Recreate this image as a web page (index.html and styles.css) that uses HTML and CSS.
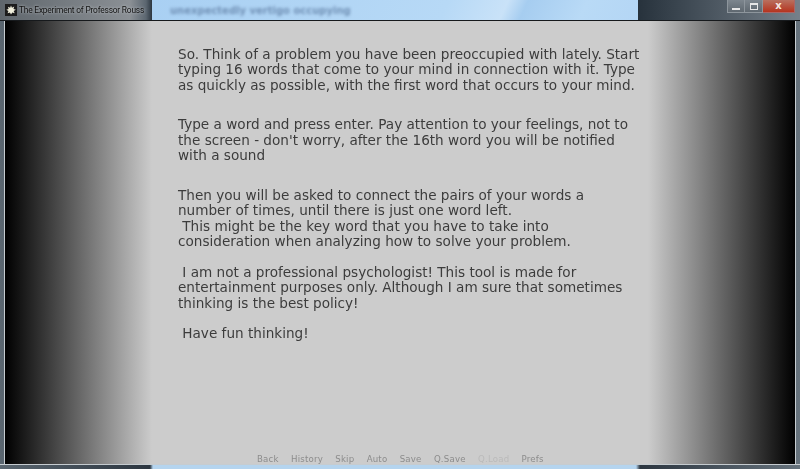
FILE: index.html
```html
<!DOCTYPE html>
<html lang="en">
<head>
<meta charset="utf-8">
<title>The Experiment of Professor Rouss</title>
<link rel="stylesheet" href="styles.css">
</head>
<body>
<div class="window">
	<div class="titlebar">
		<div class="tab">
			<svg class="appicon" width="16" height="16" viewBox="0 0 16 16">
				<rect width="16" height="16" fill="#1c1c1c"/>
				<path d="M8 2l1.3 3 3-1.6-1 3.2 3.2 1-3 1.6 1.4 3-3.2-.9L8 14l-1.4-2.7-3.2.9 1.2-3L1.8 7.6l3-1-.9-3.1 2.9 1.5z" fill="#f1efdc"/>
			</svg>
			<span class="title">The Experiment of Professor Rouss</span>
		</div>
		<div class="glass">
			<span class="behind">unexpectedly vertigo occupying</span>
		</div>
		<div class="controls">
			<div class="btn minimize"><span></span></div>
			<div class="btn maximize"><span></span></div>
			<div class="btn close">x</div>
		</div>
	</div>
	<div class="screen">
		<div class="story">
			<p class="gap-big">So. Think of a problem you have been preoccupied with lately. Start<br>typing 16 words that come to your mind in connection with it. Type<br>as quickly as possible, with the first word that occurs to your mind.</p>
			<p class="gap-big">Type a word and press enter. Pay attention to your feelings, not to<br>the screen - don't worry, after the 16th word you will be notified<br>with a sound</p>
			<p class="gap-small">Then you will be asked to connect the pairs of your words a<br>number of times, until there is just one word left.<br>&nbsp;This might be the key word that you have to take into<br>consideration when analyzing how to solve your problem.</p>
			<p class="gap-small">&nbsp;I am not a professional psychologist! This tool is made for<br>entertainment purposes only. Although I am sure that sometimes<br>thinking is the best policy!</p>
			<p>&nbsp;Have fun thinking!</p>
		</div>
		<div class="quickmenu">
			<span>Back</span>
			<span>History</span>
			<span>Skip</span>
			<span>Auto</span>
			<span>Save</span>
			<span>Q.Save</span>
			<span class="off">Q.Load</span>
			<span>Prefs</span>
		</div>
	</div>
	<div class="bottom"></div>
</div>
</body>
</html>
```

FILE: styles.css
```css
html, body{
	margin:0;
	padding:0;
	height:100%;
	overflow:hidden;
}
.window{
	width:800px;
	height:469px;
	display:flex;
	flex-direction:column;
	background:linear-gradient(to right,#5a6670 0,#2c3640 150px,#b5d4ee 153px,#b5d4ee 636px,#2c3640 640px,#66727c 100%);
	font-family:"DejaVu Sans",sans-serif;
}
.titlebar{
	height:20px;
	display:flex;
	border-bottom:1px solid #16191c;
}
.tab{
	width:152px;
	padding-left:5px;
	box-sizing:border-box;
	display:flex;
	align-items:center;
	gap:2px;
	background:linear-gradient(to right,#5f666c 0,#8b9095 130px,#5b6670 146px,#2c3640 152px);
}
.appicon{
	flex:none;
	width:12px;
	height:12px;
}
.title{
	font-family:Roboto,sans-serif;
	font-size:8.4px;
	letter-spacing:-.2px;
	color:#111;
	white-space:nowrap;
	text-shadow:0 0 3px #c8ccd0;
	filter:blur(.25px);
}
.glass{
	width:486px;
	padding-left:18px;
	box-sizing:border-box;
	display:flex;
	align-items:center;
	overflow:hidden;
	background:linear-gradient(115deg,#a9d0f3 0,#b7d9f6 60%,#c9e2f8 72%,#a6cdf0 76%,#b9daf6 88%,#b4d6f5 100%);
}
.behind{
	font-size:10px;
	color:#7090b5;
	filter:blur(1.4px);
	white-space:nowrap;
	font-weight:bold;
}
.controls{
	flex:1;
	display:flex;
	padding-left:89px;
	align-items:flex-start;
	background:linear-gradient(to right,#27323c 0,#3f4a54 50px,#76808a 100%);
}
.btn{
	height:13px;
	border:1px solid #8d959c;
	border-top:none;
	box-sizing:border-box;
	display:flex;
	align-items:center;
	justify-content:center;
	background:linear-gradient(#7d868e,#5f6870);
}
.minimize{
	width:18px;
}
.minimize span{
	width:8px;
	height:2px;
	margin-top:5px;
	background:#e6e6e6;
}
.maximize{
	width:18px;
	border-left:none;
}
.maximize span{
	width:6px;
	height:4px;
	border:1px solid #e6e6e6;
	border-top-width:2px;
}
.close{
	width:32px;
	border-left:none;
	border-color:#a66;
	background:linear-gradient(#b9705f,#b5341f);
	color:#f6e6e0;
	font-size:10px;
	font-weight:bold;
	line-height:10px;
}
.screen{
	flex:1;
	margin:0 5px;
	min-height:0;
	box-shadow:-1px 0 0 #c6ccd0,1px 0 0 #c6ccd0;
	background:linear-gradient(to right,#000 0,#ccc 147px,#ccc 643px,#000 100%);
	display:flex;
	flex-direction:column;
	padding:25.5px 0 0 173px;
	box-sizing:border-box;
}
.story{
	flex:1;
	font-size:13.6px;
	line-height:15.5px;
	color:#3c3c3c;
	white-space:nowrap;
	filter:blur(.3px);
}
.story p{
	margin:0;
}
.gap-big{
	margin-bottom:24px !important;
}
.gap-small{
	margin-bottom:15px !important;
}
.quickmenu{
	display:flex;
	gap:12.3px;
	margin-left:79px;
	height:10px;
	font-size:8.6px;
	line-height:10px;
	color:#8c8c8c;
	letter-spacing:.2px;
	filter:blur(.4px);
}
.quickmenu .off{
	color:#bababa;
}
.bottom{
	height:5px;
	border-top:1px solid #c6ccd0;
	box-sizing:border-box;
}
```
